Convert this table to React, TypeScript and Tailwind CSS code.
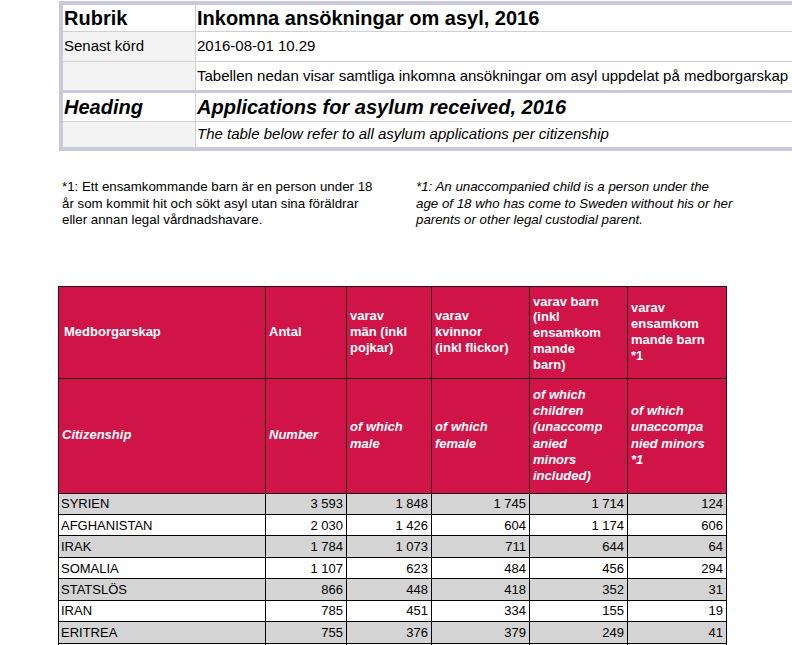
import React from "react";

const rows: [string, string, string, string, string, string][] = [
  ["SYRIEN", "3 593", "1 848", "1 745", "1 714", "124"],
  ["AFGHANISTAN", "2 030", "1 426", "604", "1 174", "606"],
  ["IRAK", "1 784", "1 073", "711", "644", "64"],
  ["SOMALIA", "1 107", "623", "484", "456", "294"],
  ["STATSLÖS", "866", "448", "418", "352", "31"],
  ["IRAN", "785", "451", "334", "155", "19"],
  ["ERITREA", "755", "376", "379", "249", "41"],
];

function Lines({ items }: { items: string[] }) {
  return (
    <>
      {items.map((t, i) => (
        <span key={i} className="block whitespace-nowrap">
          {t}
        </span>
      ))}
    </>
  );
}

export default function App() {
  return (
    <div
      className="relative h-[645px] w-[792px] overflow-hidden bg-white text-black"
      style={{ fontFamily: '"Liberation Sans", Arial, sans-serif' }}
    >
      {/* top info block */}
      <div className="ml-[59px] mt-[1px] w-[800px] border-[4px] border-r-0 border-[#c9c9d9]">
        <div className="flex h-[27px] border-b border-[#cfcfd6]">
          <div className="flex w-[133px] items-center border-r border-[#cfcfd6] bg-white pl-[1px] text-[20px] font-bold">
            Rubrik
          </div>
          <div className="flex items-center pl-[1px] text-[20px] font-bold whitespace-nowrap">
            Inkomna ansökningar om asyl, 2016
          </div>
        </div>
        <div className="flex h-[30px] border-b border-[#cfcfd6]">
          <div className="flex w-[133px] items-center border-r border-[#cfcfd6] bg-[#f3f3f3] pl-[1px] text-[15px]">
            Senast körd
          </div>
          <div className="flex items-center pl-[1px] text-[15px]">2016-08-01 10.29</div>
        </div>
        <div className="flex h-[31px] border-b-[3px] border-[#c9c9d9]">
          <div className="w-[133px] border-r border-[#cfcfd6] bg-[#f3f3f3]" />
          <div className="flex items-center pl-[1px] text-[15px] whitespace-nowrap">
            Tabellen nedan visar samtliga inkomna ansökningar om asyl uppdelat på medborgarskap
          </div>
        </div>
        <div className="flex h-[29px] border-b border-[#cfcfd6]">
          <div className="flex w-[133px] items-center border-r border-[#cfcfd6] bg-white pl-[1px] text-[20px] font-bold italic">
            Heading
          </div>
          <div className="flex items-center pl-[1px] text-[20px] font-bold italic whitespace-nowrap">
            Applications for asylum received, 2016
          </div>
        </div>
        <div className="flex h-[25px]">
          <div className="w-[133px] border-r border-[#cfcfd6] bg-[#f3f3f3]" />
          <div className="flex items-center pl-[1px] text-[15px] italic whitespace-nowrap">
            The table below refer to all asylum applications per citizenship
          </div>
        </div>
      </div>

      {/* footnotes */}
      <div className="mt-[28px] flex text-[13.3px] leading-[16.5px]">
        <div className="ml-[62px] w-[354px]">
          <Lines
            items={[
              "*1: Ett ensamkommande barn är en person under 18",
              "år som kommit hit och sökt asyl utan sina föräldrar",
              "eller annan legal vårdnadshavare.",
            ]}
          />
        </div>
        <div className="italic">
          <Lines
            items={[
              "*1: An unaccompanied child is a person under the",
              "age of 18 who has come to Sweden without his or her",
              "parents or other legal custodial parent.",
            ]}
          />
        </div>
      </div>

      {/* main table */}
      <table className="ml-[58px] mt-[57px] table-fixed border-collapse text-[13px]">
        <colgroup>
          <col className="w-[207px]" />
          <col className="w-[81px]" />
          <col className="w-[85px]" />
          <col className="w-[98px]" />
          <col className="w-[98px]" />
          <col className="w-[99px]" />
        </colgroup>
        <thead className="bg-[#d11448] font-bold leading-[15.8px] text-white">
          <tr className="h-[92px]">
            <td className="border border-[#2a0a12] px-[5px] align-middle">Medborgarskap</td>
            <td className="border border-[#2a0a12] px-[3px] align-middle">Antal</td>
            <td className="border border-[#2a0a12] px-[3px] align-middle">
              <Lines items={["varav", "män (inkl", "pojkar)"]} />
            </td>
            <td className="border border-[#2a0a12] px-[3px] align-middle">
              <Lines items={["varav", "kvinnor", "(inkl flickor)"]} />
            </td>
            <td className="border border-[#2a0a12] px-[3px] pt-[2px] align-middle">
              <Lines items={["varav barn", "(inkl", "ensamkom", "mande", "barn)"]} />
            </td>
            <td className="border border-[#2a0a12] px-[3px] align-middle">
              <Lines items={["varav", "ensamkom", "mande barn", "*1"]} />
            </td>
          </tr>
          <tr className="h-[115px] italic leading-[16.2px]">
            <td className="border border-[#2a0a12] px-[3px] align-middle">Citizenship</td>
            <td className="border border-[#2a0a12] px-[3px] align-middle">Number</td>
            <td className="border border-[#2a0a12] px-[3px] align-middle">
              <Lines items={["of which", "male"]} />
            </td>
            <td className="border border-[#2a0a12] px-[3px] align-middle">
              <Lines items={["of which", "female"]} />
            </td>
            <td className="border border-[#2a0a12] px-[3px] align-middle">
              <Lines
                items={["of which", "children", "(unaccomp", "anied", "minors", "included)"]}
              />
            </td>
            <td className="border border-[#2a0a12] px-[3px] align-middle">
              <Lines items={["of which", "unaccompa", "nied minors", "*1"]} />
            </td>
          </tr>
        </thead>
        <tbody>
          {rows.map((r, i) => (
            <tr key={r[0]} className={i % 2 === 0 ? "h-[21.45px] bg-[#d4d4d4]" : "h-[21.45px] bg-white"}>
              <td className="border border-black px-[2px] leading-none">{r[0]}</td>
              {r.slice(1).map((v, j) => (
                <td key={j} className="border border-black px-[3px] text-right leading-none">
                  {v}
                </td>
              ))}
            </tr>
          ))}
          <tr className="h-[21.45px] bg-white">
            <td className="border border-black" />
            <td className="border border-black" />
            <td className="border border-black" />
            <td className="border border-black" />
            <td className="border border-black" />
            <td className="border border-black" />
          </tr>
        </tbody>
      </table>
    </div>
  );
}
